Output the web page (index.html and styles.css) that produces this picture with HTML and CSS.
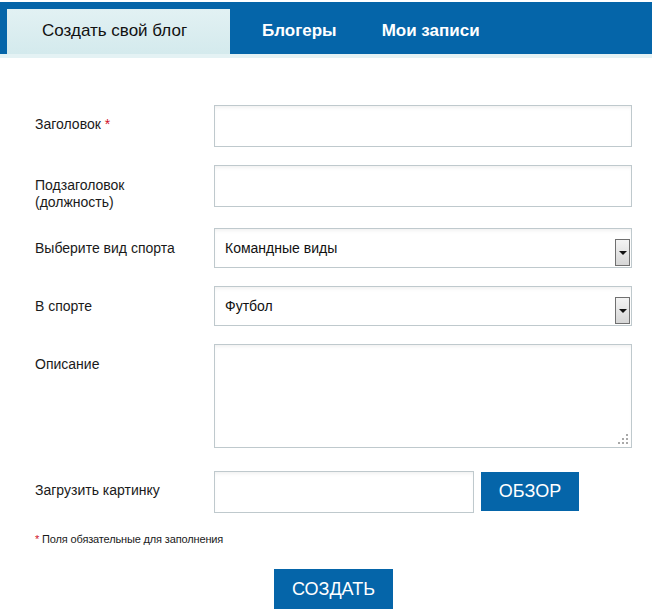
FILE: index.html
```html
<!DOCTYPE html>
<html lang="ru">
<head>
    <meta charset="UTF-8">
    <title>Создать свой блог</title>
    <link rel="stylesheet" href="styles.css">
</head>
<body>
    <div class="tabs">
        <a class="tab active" href="#">Создать свой блог</a>
        <a class="tab" href="#">Блогеры</a>
        <a class="tab" href="#">Мои записи</a>
    </div>
    <div class="strip"></div>

    <form class="blog-form">
        <div class="row row-1">
            <label>Заголовок <span class="req">*</span></label>
            <input type="text" class="field">
        </div>
        <div class="row row-2">
            <label>Подзаголовок<br>(должность)</label>
            <input type="text" class="field">
        </div>
        <div class="row row-3">
            <label>Выберите вид спорта</label>
            <div class="select">
                <select class="field">
                    <option>Командные виды</option>
                </select>
                <span class="arrow"></span>
            </div>
        </div>
        <div class="row row-4">
            <label>В спорте</label>
            <div class="select">
                <select class="field">
                    <option>Футбол</option>
                </select>
                <span class="arrow"></span>
            </div>
        </div>
        <div class="row row-5">
            <label>Описание</label>
            <textarea class="field area"></textarea>
        </div>
        <div class="row row-6">
            <label>Загрузить картинку</label>
            <div class="upload">
                <input type="text" class="field file">
                <button type="button" class="btn browse">ОБЗОР</button>
            </div>
        </div>
        <p class="note"><span class="req">*</span> Поля обязательные для заполнения</p>
        <div class="submit">
            <button type="submit" class="btn create">СОЗДАТЬ</button>
        </div>
    </form>
</body>
</html>
```

FILE: styles.css
```css
body {
    margin: 0;
    font-family: "Liberation Sans", Arial, sans-serif;
    color: #111;
    background: #fff;
}

.tabs {
    display: flex;
    width: 645px;
    height: 45px;
    margin-top: 2px;
    padding: 7px 0 0 7px;
    background: #0565a9;
}

.tab {
    display: block;
    color: #fff;
    font-size: 17px;
    font-weight: bold;
    text-decoration: none;
    line-height: 44px;
    padding: 0 0 0 32px;
}

.tab.active {
    width: 188px;
    padding-left: 35px;
    background: linear-gradient(to bottom, #e2f1f3, #d4eaed);
    color: #111;
    font-weight: normal;
}

.tab:last-child {
    padding-left: 45px;
}

.strip {
    height: 4px;
    background: #e4f2f4;
    width: 652px;
}

.blog-form {
    padding: 47px 0 0 35px;
    width: 597px;
}

.row {
    display: flex;
    align-items: flex-start;
}

.row label {
    box-sizing: border-box;
    width: 179px;
    height: 40px;
    font-size: 14px;
    line-height: 17px;
    padding-top: 11px;
    color: #1a1a1a;
}

.req {
    color: #d0102a;
}

.field {
    box-sizing: border-box;
    width: 418px;
    height: 42px;
    margin: 0;
    border: 1px solid #bfc9cd;
    background: #fff;
    box-shadow: inset 0 3px 4px -2px rgba(0, 0, 0, 0.08);
    font-family: "Liberation Sans", Arial, sans-serif;
    font-size: 14px;
    color: #111;
    outline: none;
}

.row-2 { margin-top: 18px; }
.row-3 { margin-top: 21px; }
.row-4 { margin-top: 18px; }
.row-5 { margin-top: 18px; }
.row-6 { margin-top: 23px; }

.row-2 label, .row-3 label, .row-4 label, .row-5 label {
    padding-top: 12px;
}

.select {
    position: relative;
}

.select .field {
    height: 40px;
    padding: 0 0 0 10px;
    appearance: none;
    -webkit-appearance: none;
}

.arrow {
    position: absolute;
    right: 2px;
    top: 11px;
    width: 15px;
    height: 27px;
    box-sizing: border-box;
    border: 1px solid #707070;
    background: linear-gradient(to bottom, #f4f4f4, #d6d6d6);
}

.arrow::after {
    content: "";
    position: absolute;
    left: 3px;
    top: 11px;
    border-left: 4px solid transparent;
    border-right: 4px solid transparent;
    border-top: 4px solid #111;
}

.area {
    height: 104px;
    resize: none;
    background:
        radial-gradient(circle, #a9a9a9 1px, transparent 1.2px) right 2px bottom 2px / 4px 4px no-repeat,
        radial-gradient(circle, #a9a9a9 1px, transparent 1.2px) right 6px bottom 2px / 4px 4px no-repeat,
        radial-gradient(circle, #a9a9a9 1px, transparent 1.2px) right 10px bottom 2px / 4px 4px no-repeat,
        radial-gradient(circle, #a9a9a9 1px, transparent 1.2px) right 2px bottom 6px / 4px 4px no-repeat,
        radial-gradient(circle, #a9a9a9 1px, transparent 1.2px) right 6px bottom 6px / 4px 4px no-repeat,
        radial-gradient(circle, #a9a9a9 1px, transparent 1.2px) right 2px bottom 10px / 4px 4px no-repeat,
        #fff;
}

.upload {
    display: flex;
    align-items: flex-start;
    gap: 7px;
}

.file {
    width: 260px;
}

.btn {
    border: none;
    background: #0565a9;
    color: #fff;
    font-family: "Liberation Sans", Arial, sans-serif;
    font-size: 18px;
    cursor: pointer;
    padding: 0;
}

.browse {
    width: 98px;
    height: 39px;
    margin-top: 1px;
}

.note {
    margin: 19px 0 0;
    font-size: 11px;
    line-height: 14px;
    letter-spacing: -0.15px;
    color: #1a1a1a;
}

.submit {
    display: flex;
    justify-content: center;
    margin-top: 23px;
}

.create {
    width: 119px;
    height: 40px;
}
```
